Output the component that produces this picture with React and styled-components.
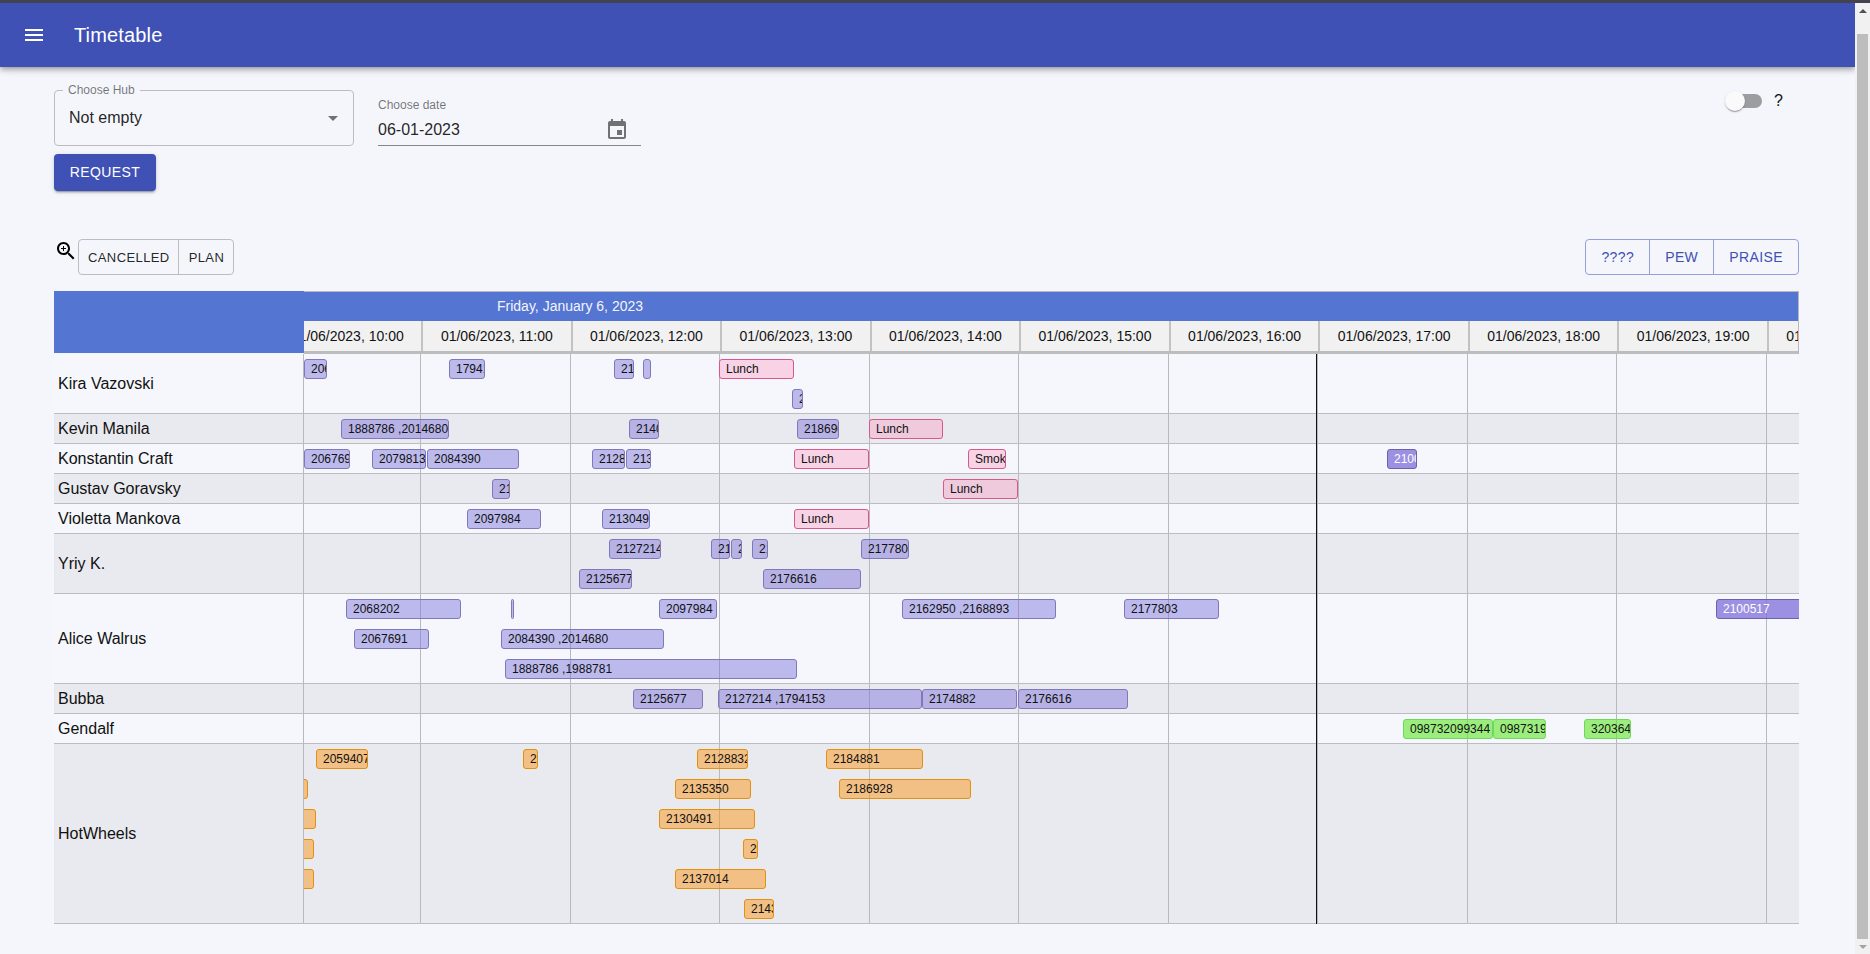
import React from 'react'
import styled, { createGlobalStyle, css } from 'styled-components'

const HOUR_WIDTH = 149.55
const TRACK_LEFT = 304
const GRID_LINES = [420, 570, 719, 869, 1018, 1168, 1317, 1467, 1616, 1766]
const HOURS = [10, 11, 12, 13, 14, 15, 16, 17, 18, 19, 20]

// each bar: lane, start x, end x (page pixels), text, kind
const ROWS = [
  { name: 'Kira Vazovski', lanes: 2, bars: [
    [0, 304, 327, '2068202'], [0, 449, 485, '1794153'], [0, 614, 634, '2140000'], [0, 643, 651, ''],
    [0, 719, 794, 'Lunch', 'pink'], [1, 792, 803, '2186900'],
  ] },
  { name: 'Kevin Manila', lanes: 1, bars: [
    [0, 341, 449, '1888786 ,2014680'], [0, 629, 659, '2140000'], [0, 797, 839, '2186900'], [0, 869, 943, 'Lunch', 'pink'],
  ] },
  { name: 'Konstantin Craft', lanes: 1, bars: [
    [0, 304, 350, '2067691'], [0, 372, 426, '2079813'], [0, 427, 519, '2084390'], [0, 592, 625, '2128832'],
    [0, 626, 651, '2135350'], [0, 794, 869, 'Lunch', 'pink'], [0, 968, 1006, 'Smoke', 'pink'], [0, 1387, 1417, '2100517', 'done'],
  ] },
  { name: 'Gustav Goravsky', lanes: 1, bars: [
    [0, 492, 510, '2130491'], [0, 943, 1018, 'Lunch', 'pink'],
  ] },
  { name: 'Violetta Mankova', lanes: 1, bars: [
    [0, 467, 541, '2097984'], [0, 602, 650, '2130491'], [0, 794, 869, 'Lunch', 'pink'],
  ] },
  { name: 'Yriy K.', lanes: 2, bars: [
    [0, 609, 661, '2127214'], [0, 711, 730, '2128832'], [0, 731, 742, '2135350'], [0, 752, 768, '2143000'],
    [0, 861, 909, '2177803'], [1, 579, 632, '2125677'], [1, 763, 861, '2176616'],
  ] },
  { name: 'Alice Walrus', lanes: 3, bars: [
    [0, 346, 461, '2068202'], [0, 511, 514, ''], [0, 659, 717, '2097984'], [0, 902, 1056, '2162950 ,2168893'],
    [0, 1124, 1219, '2177803'], [0, 1716, 1830, '2100517', 'done'],
    [1, 354, 429, '2067691'], [1, 501, 664, '2084390 ,2014680'], [2, 505, 797, '1888786 ,1988781'],
  ] },
  { name: 'Bubba', lanes: 1, bars: [
    [0, 633, 703, '2125677'], [0, 718, 922, '2127214 ,1794153'], [0, 922, 1017, '2174882'], [0, 1018, 1128, '2176616'],
  ] },
  { name: 'Gendalf', lanes: 1, bars: [
    [0, 1403, 1493, '098732099344', 'green'], [0, 1493, 1546, '098731900', 'green'], [0, 1584, 1631, '320364', 'green'],
  ] },
  { name: 'HotWheels', lanes: 6, bars: [
    [0, 316, 368, '2059407', 'orange'], [0, 523, 538, '2', 'orange'], [0, 697, 748, '2128832', 'orange'], [0, 826, 923, '2184881', 'orange'],
    [1, 290, 308, '', 'orange'], [1, 675, 751, '2135350', 'orange'], [1, 839, 971, '2186928', 'orange'],
    [2, 290, 316, '', 'orange'], [2, 659, 755, '2130491', 'orange'],
    [3, 290, 314, '', 'orange'], [3, 743, 758, '2', 'orange'],
    [4, 290, 314, '', 'orange'], [4, 675, 766, '2137014', 'orange'],
    [5, 744, 774, '2143000', 'orange'],
  ] },
]

const BAR_KINDS = {
  plan: css`
    background: rgba(120, 110, 220, 0.45);
    border-color: #8078b8;
    color: #111;
  `,
  done: css`
    background: rgba(125, 110, 217, 0.75);
    border-color: #6a62ad;
    color: #fff;
  `,
  pink: css`
    background: rgba(252, 130, 175, 0.3);
    border-color: #d9588c;
    color: #111;
  `,
  orange: css`
    background: rgba(251, 150, 25, 0.5);
    border-color: #e0910f;
    color: #111;
  `,
  green: css`
    background: rgba(95, 232, 42, 0.6);
    border-color: #72d65c;
    color: #111;
  `,
}

function App() {
  return (
    <>
      <GlobalStyle />
      <Shell>
        <TopStrip />
        <Frame>
          <Main>
            <AppBar>
              <MenuIcon viewBox="0 0 24 24">
                <path d="M3 18h18v-2H3v2zm0-5h18v-2H3v2zm0-7v2h18V6H3z" />
              </MenuIcon>
              <Title>Timetable</Title>
            </AppBar>

            <Content>
              <FilterRow>
                <FilterLeft>
                  <Fields>
                    <HubSelect>
                      <HubLabel>Choose Hub</HubLabel>
                      <HubValue>Not empty</HubValue>
                      <FieldIcon viewBox="0 0 24 24">
                        <path d="M7 10l5 5 5-5z" />
                      </FieldIcon>
                    </HubSelect>
                    <DateField>
                      <DateLabel>Choose date</DateLabel>
                      <DateInput>
                        <span>06-01-2023</span>
                        <FieldIcon viewBox="0 0 24 24">
                          <path d="M17 12h-5v5h5v-5zM16 1v2H8V1H6v2H5c-1.11 0-1.99.9-1.99 2L3 19c0 1.1.89 2 2 2h14c1.1 0 2-.9 2-2V5c0-1.1-.9-2-2-2h-1V1h-2zm3 18H5V8h14v11z" />
                        </FieldIcon>
                      </DateInput>
                    </DateField>
                  </Fields>
                  <RequestButton>REQUEST</RequestButton>
                </FilterLeft>
                <SwitchBox>
                  <SwitchTrack>
                    <SwitchThumb />
                  </SwitchTrack>
                  <SwitchText>?</SwitchText>
                </SwitchBox>
              </FilterRow>

              <ActionRow>
                <ActionLeft>
                  <ZoomIcon viewBox="0 0 24 24">
                    <path d="M15.5 14h-.79l-.28-.27C15.41 12.59 16 11.11 16 9.5 16 5.91 13.09 3 9.5 3S3 5.91 3 9.5 5.91 16 9.5 16c1.61 0 3.09-.59 4.23-1.57l.27.28v.79l5 4.99L20.49 19l-4.99-5zm-6 0C7.01 14 5 11.99 5 9.5S7.01 5 9.5 5 14 7.01 14 9.5 11.99 14 9.5 14z" />
                    <path d="M12 10h-2v2H9v-2H7V9h2V7h1v2h2v1z" />
                  </ZoomIcon>
                  <ButtonGroup>
                    <GreyButton>CANCELLED</GreyButton>
                    <GreyButton>PLAN</GreyButton>
                  </ButtonGroup>
                </ActionLeft>
                <ButtonGroup $blue>
                  <BlueButton>????</BlueButton>
                  <BlueButton>PEW</BlueButton>
                  <BlueButton>PRAISE</BlueButton>
                </ButtonGroup>
              </ActionRow>

              <Table>
                <TableHead>
                  <HeadCorner />
                  <HeadTimes>
                    <DateStrip>Friday, January 6, 2023</DateStrip>
                    <TimeRow>
                      {HOURS.map((h) => (
                        <TimeCell key={h}>01/06/2023, {h}:00</TimeCell>
                      ))}
                    </TimeRow>
                  </HeadTimes>
                </TableHead>
                <TableBody>
                  {ROWS.map((row, i) => (
                    <Row key={row.name} $even={i % 2 === 1} $lanes={row.lanes}>
                      <RowName>{row.name}</RowName>
                      <Track>
                        {GRID_LINES.map((x) => (
                          <GridLine key={x} style={{ left: x - TRACK_LEFT }} />
                        ))}
                        {row.bars.map(([lane, from, to, text, kind = 'plan'], j) => (
                          <Bar
                            key={j}
                            $kind={kind}
                            style={{ top: 5 + lane * 30, left: from - TRACK_LEFT, width: to - from }}
                          >
                            {text}
                          </Bar>
                        ))}
                      </Track>
                    </Row>
                  ))}
                  <NowLine />
                </TableBody>
              </Table>
            </Content>
          </Main>

          <Scrollbar>
            <ScrollArrow />
            <ScrollThumb />
            <ScrollArrow $down />
          </Scrollbar>
        </Frame>
      </Shell>
    </>
  )
}

export default App

const GlobalStyle = createGlobalStyle`
  html, body {
    margin: 0;
    padding: 0;
    height: 100%;
    overflow: hidden;
    background: #f4f6fb;
    font-family: "Liberation Sans", Arial, sans-serif;
  }
`

const Shell = styled.div`
  display: flex;
  flex-direction: column;
  height: 100vh;
`

const TopStrip = styled.div`
  height: 3px;
  flex: none;
  background: #43434f;
`

const Frame = styled.div`
  display: flex;
  flex: 1;
  min-height: 0;
`

const Main = styled.div`
  flex: 1;
  min-width: 0;
  overflow: hidden;
`

const AppBar = styled.header`
  display: flex;
  align-items: center;
  height: 64px;
  padding-left: 22px;
  background: #3f51b5;
  color: #fff;
  position: relative;
  box-shadow: 0 2px 4px -1px rgba(0, 0, 0, 0.2), 0 4px 5px 0 rgba(0, 0, 0, 0.14), 0 1px 10px 0 rgba(0, 0, 0, 0.12);
`

const MenuIcon = styled.svg`
  width: 24px;
  height: 24px;
  fill: #fff;
  margin-right: 28px;
`

const Title = styled.h1`
  margin: 0;
  font-size: 20px;
  font-weight: 400;
  letter-spacing: 0.15px;
`

const Content = styled.div`
  padding: 23px 56px 0 54px;
`

const FilterRow = styled.div`
  display: flex;
  justify-content: space-between;
  align-items: flex-start;
`

const FilterLeft = styled.div`
  display: flex;
  flex-direction: column;
  align-items: flex-start;
`

const Fields = styled.div`
  display: flex;
  gap: 24px;
`

const HubSelect = styled.div`
  position: relative;
  box-sizing: border-box;
  width: 300px;
  height: 56px;
  display: flex;
  align-items: center;
  justify-content: space-between;
  padding: 0 8px 0 14px;
  border: 1px solid #bcbdc1;
  border-radius: 4px;
`

const HubLabel = styled.span`
  position: absolute;
  top: -8px;
  left: 8px;
  padding: 0 5px;
  background: #f4f6fb;
  font-size: 12px;
  line-height: 14px;
  color: rgba(0, 0, 0, 0.54);
`

const HubValue = styled.span`
  font-size: 16px;
  color: rgba(0, 0, 0, 0.87);
`

const FieldIcon = styled.svg`
  width: 24px;
  height: 24px;
  fill: rgba(0, 0, 0, 0.54);
`

const DateField = styled.div`
  width: 263px;
  padding-top: 8px;
`

const DateLabel = styled.div`
  font-size: 12px;
  line-height: 14px;
  color: rgba(0, 0, 0, 0.54);
`

const DateInput = styled.div`
  display: flex;
  align-items: center;
  justify-content: space-between;
  height: 24px;
  padding: 6px 12px 3px 0;
  border-bottom: 1px solid #85868a;
  font-size: 16px;
  color: rgba(0, 0, 0, 0.87);
`

const RequestButton = styled.button`
  box-sizing: border-box;
  width: 102px;
  height: 37px;
  margin-top: 8px;
  padding: 0 0 1px;
  border: 0;
  border-radius: 4px;
  background: #3f51b5;
  color: #fff;
  font-family: inherit;
  font-size: 14px;
  letter-spacing: 0.4px;
  box-shadow: 0 3px 1px -2px rgba(0, 0, 0, 0.2), 0 2px 2px 0 rgba(0, 0, 0, 0.14), 0 1px 5px 0 rgba(0, 0, 0, 0.12);
`

const SwitchBox = styled.div`
  display: flex;
  align-items: center;
  margin: 1px 16px 0 0;
  height: 20px;
`

const SwitchTrack = styled.div`
  position: relative;
  width: 29px;
  height: 14px;
  border-radius: 7px;
  background: #9c9da1;
`

const SwitchThumb = styled.div`
  position: absolute;
  top: -3px;
  left: -8px;
  width: 20px;
  height: 20px;
  border-radius: 50%;
  background: #fafafa;
  box-shadow: 0 2px 1px -1px rgba(0, 0, 0, 0.2), 0 1px 1px 0 rgba(0, 0, 0, 0.14), 0 1px 3px 0 rgba(0, 0, 0, 0.12);
`

const SwitchText = styled.span`
  margin-left: 12px;
  font-size: 16px;
  color: #111;
`

const ActionRow = styled.div`
  display: flex;
  justify-content: space-between;
  margin-top: 48px;
`

const ActionLeft = styled.div`
  display: flex;
  align-items: flex-start;
`

const ZoomIcon = styled.svg`
  width: 24px;
  height: 24px;
  fill: #000;
`

const ButtonGroup = styled.div`
  display: flex;
  box-sizing: border-box;
  height: 36px;
  border: 1px solid ${(p) => (p.$blue ? '#949fdb' : '#bcbdc1')};
  border-radius: 4px;
`

const GreyButton = styled.button`
  padding: 0 8px 0 9px;
  border: 0;
  border-right: 1px solid #bcbdc1;
  background: transparent;
  color: rgba(0, 0, 0, 0.87);
  font-family: inherit;
  font-size: 13px;
  letter-spacing: 0.4px;

  &:last-child {
    padding: 0 9px 0 10px;
    border-right: 0;
  }
`

const BlueButton = styled.button`
  padding: 0 15px;
  border: 0;
  border-right: 1px solid #949fdb;
  background: transparent;
  color: #3f51b5;
  font-family: inherit;
  font-size: 14px;
  letter-spacing: 0.4px;

  &:last-child {
    border-right: 0;
  }
`

const Table = styled.div`
  margin-top: 16px;
`

const TableHead = styled.div`
  display: flex;
  height: 63px;
`

const HeadCorner = styled.div`
  flex: none;
  width: 250px;
  height: 62px;
  background: #5475d1;
`

const HeadTimes = styled.div`
  flex: 1;
  min-width: 0;
  overflow: hidden;
  box-sizing: border-box;
  border-top: 1px solid #b9b9bd;
  border-right: 1px solid #b9b9bd;
`

const DateStrip = styled.div`
  box-sizing: border-box;
  height: 29px;
  padding-left: 193px;
  background: #5475d1;
  color: #f3f4fb;
  font-size: 14px;
  line-height: 28px;
`

const TimeRow = styled.div`
  display: flex;
  height: 33px;
  margin-left: -30.5px;
  box-sizing: border-box;
  border-bottom: 3px solid #bdbdbd;
`

const TimeCell = styled.div`
  flex: none;
  box-sizing: border-box;
  width: ${HOUR_WIDTH}px;
  border-right: 2px solid #c2c2c2;
  background: #f1f1f1;
  color: #111;
  font-size: 14px;
  line-height: 31px;
  text-align: center;
  white-space: nowrap;
`

const TableBody = styled.div`
  position: relative;
`

const Row = styled.div`
  display: flex;
  box-sizing: border-box;
  height: ${(p) => p.$lanes * 30}px;
  background: ${(p) => (p.$even ? '#e9eaef' : '#f5f7fc')};
  border-bottom: 1px solid #bcbdc1;
`

const RowName = styled.div`
  flex: none;
  box-sizing: border-box;
  width: 250px;
  padding-left: 4px;
  border-right: 1px solid #b9b9bd;
  display: flex;
  align-items: center;
  font-size: 16px;
  color: #111;
`

const Track = styled.div`
  flex: 1;
  min-width: 0;
  position: relative;
  overflow: hidden;
`

const GridLine = styled.div`
  position: absolute;
  top: 0;
  bottom: 0;
  width: 1px;
  background: #b9b9bd;
`

const Bar = styled.div`
  position: absolute;
  box-sizing: border-box;
  height: 20px;
  text-indent: 6px;
  border: 1px solid;
  border-radius: 3px;
  overflow: hidden;
  font-size: 12px;
  line-height: 18px;
  white-space: nowrap;
  ${(p) => BAR_KINDS[p.$kind]}
`

const NowLine = styled.div`
  position: absolute;
  top: 0;
  bottom: 0;
  left: 1262px;
  width: 1px;
  background: #111;
`

const Scrollbar = styled.div`
  flex: none;
  width: 15px;
  display: flex;
  flex-direction: column;
  align-items: center;
  background: #f1f1f1;
`

const ScrollArrow = styled.div`
  flex: none;
  height: 15px;
  display: flex;
  align-items: center;
  justify-content: center;

  &::before {
    content: '';
    border-left: 4px solid transparent;
    border-right: 4px solid transparent;
    ${(p) => (p.$down ? 'border-top: 4px solid #a3a3a3;' : 'border-bottom: 4px solid #505050;')}
  }
`

const ScrollThumb = styled.div`
  flex: 1;
  width: 11px;
  margin: 16px 0 0;
  background: #bdbdbd;
`
